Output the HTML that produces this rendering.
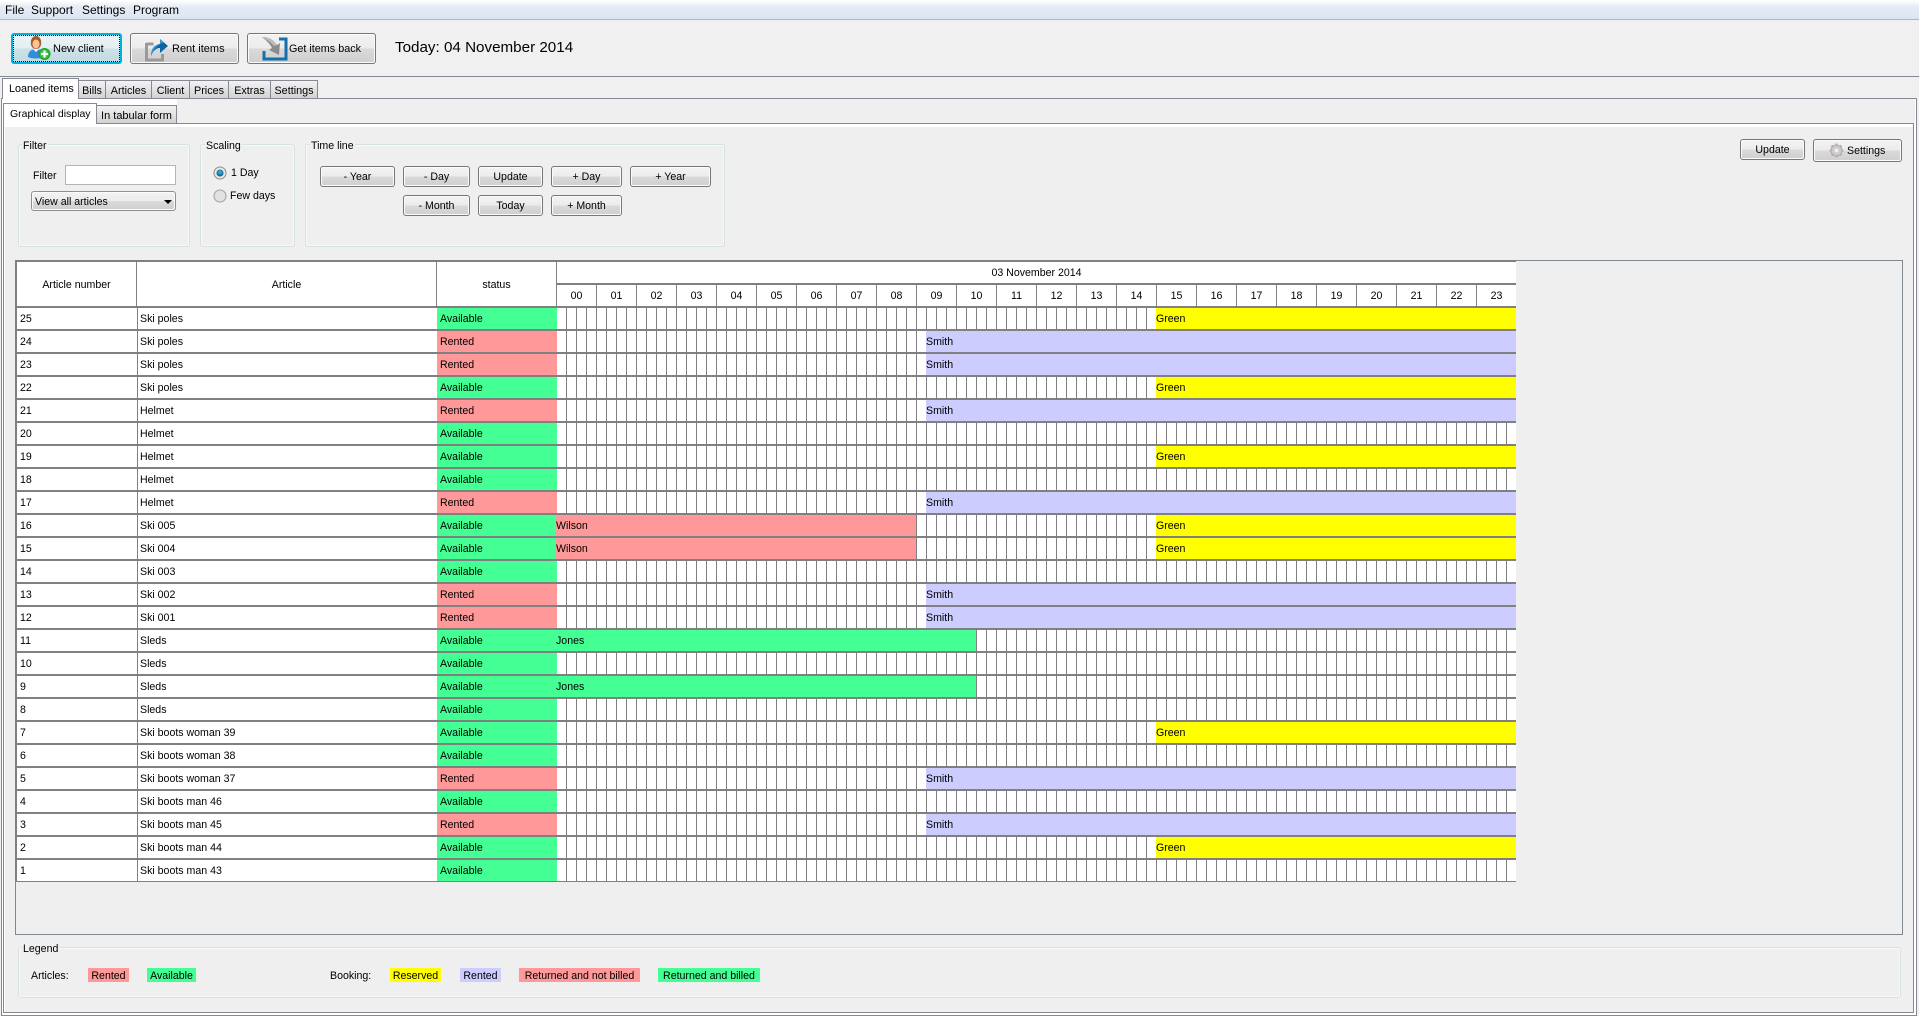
<!DOCTYPE html>
<html><head><meta charset="utf-8"><title>Loaned items</title>
<style>
html,body{margin:0;padding:0}
body{width:1919px;height:1016px;position:relative;overflow:hidden;background:#f0f0f0;font:10.6px/14px "Liberation Sans",sans-serif;color:#000}
div,span.t{position:absolute;box-sizing:border-box}
.t{position:absolute;white-space:nowrap}
.c{text-align:center}
.btn{position:absolute;box-sizing:border-box;border:1px solid #777;border-radius:3px;background:linear-gradient(#f3f3f3 0,#ececec 49%,#dadada 50%,#cfcfcf 100%);text-align:center;white-space:nowrap;box-shadow:inset 0 0 0 1px #fbfbfb}
.tab{border:1px solid #858a92;border-bottom:0;background:linear-gradient(#f2f2f2,#d2d2d2);text-align:center;white-space:nowrap;font-size:10.8px}
.grp{border:1px solid #d6e1e4;border-radius:3px;box-shadow:inset 0 0 0 1px #f7f9f9}
.lb{background:#f0f0f0;padding:0 1px}
.h{position:absolute;background:#fff;top:262px;height:44px;text-align:center;line-height:46px}
.r{position:absolute;left:17px;width:1499px;height:21px;background:#fff;line-height:23px}
.r>b,.hh{font-weight:400}
.r>b{position:absolute;top:0;height:21px;white-space:nowrap}
.n{left:3px;width:119px}
.a{left:120px;width:299px;background:#fff;border-left:1px solid #808080;padding-left:2px}
.s{left:420px;width:119px;padding-left:3px}
.g{left:540px;width:959px;background:repeating-linear-gradient(90deg,#fff 0 9px,#808080 9px 10px)}
.av{background:#44ff94}.re{background:#ff9999}
.sm{left:909px;width:590px;background:#ccccff}
.gr{left:1139px;width:360px;background:#ffff00}
.wi{left:539px;width:360px;background:#ff9999}
.jo{left:539px;width:420px;background:#44ff94}
.hr{position:absolute;top:285px;height:21px;width:39px;background:#fff;text-align:center;line-height:23px}
.lg{position:absolute;top:968px;height:14px;line-height:16px;text-align:center;white-space:nowrap}
</style></head><body>

<div style="left:0;top:0;width:1919px;height:19px;background:linear-gradient(#ffffff 0,#e6ecf6 35%,#dbe5f3 100%)"></div>
<div style="left:0;top:19px;width:1919px;height:1px;background:#b4b8be"></div>
<span class="t" style="left:5px;top:3px;font-size:12px">File</span>
<span class="t" style="left:31px;top:3px;font-size:12px">Support</span>
<span class="t" style="left:82px;top:3px;font-size:12px">Settings</span>
<span class="t" style="left:133px;top:3px;font-size:12px">Program</span>

<div class="btn" style="left:11px;top:33px;width:111px;height:31px;border:2px solid #00b2dc;background:linear-gradient(#eaf3f7 0,#e3eff4 49%,#cde1e9 50%,#c3dae3 100%);box-shadow:none"><div style="left:0;top:0;right:0;bottom:0;border:1px dotted #000"></div></div>
<svg style="position:absolute;left:26px;top:35px" width="26" height="26" viewBox="0 0 26 26"><path d="M2 22c0-6 4-8 8-8s8 2 8 8c-4 2-12 2-16 0z" fill="#2f8fd8"/><path d="M7 14l3 3 3-3z" fill="#fff"/><path d="M5 10C4 4 7 1 10 1s6 3 5 9c-1 2-2 4-5 4s-4-2-5-4z" fill="#a85a20"/><ellipse cx="10" cy="9" rx="3.500" ry="4.500" fill="#f4c49c"/><circle cx="18.500" cy="19" r="6" fill="#1fa02c"/><circle cx="18.500" cy="19" r="4.800" fill="#38c040"/><path d="M18.500 15.500v7M15 19h7" stroke="#fff" stroke-width="2.200"/></svg>
<span class="t" style="left:53px;top:42px;font-size:11px">New client</span>

<div class="btn" style="left:130px;top:33px;width:109px;height:31px"></div>
<svg style="position:absolute;left:145px;top:36px" width="24" height="26" viewBox="0 0 24 26"><path d="M1.500 8h7M1.500 7v17h16v-6" fill="none" stroke="#9a9a9a" stroke-width="3"/><path d="M6 20c0-7 3-11 9-12V3l8 7-8 7v-5c-4 0-7 3-9 8z" fill="#12639e"/><path d="M6 20c0-7 3-11 9-12V3l4 3.500C13 8 9 12 6 20z" fill="#2f9ad8"/></svg>
<span class="t" style="left:172px;top:42px;font-size:11px">Rent items</span>

<div class="btn" style="left:247px;top:33px;width:129px;height:31px"></div>
<svg style="position:absolute;left:262px;top:36px" width="26" height="25" viewBox="0 0 26 25"><path d="M17 3h7v20H2v-8" fill="none" stroke="#1670ad" stroke-width="3"/><path d="M0 1c7 0 12 3 15 8l3-2-1 12-10-5 3-2C8 8 5 5 0 1z" fill="#8c8c8c"/><path d="M0 1c7 0 12 3 15 8l-3 1C9 6 5 4 0 1z" fill="#bdbdbd"/></svg>
<span class="t" style="left:289px;top:42px;font-size:10.800px">Get items back</span>

<span class="t" style="left:395px;top:38px;font-size:15.200px;line-height:19px">Today: 04 November 2014</span>

<div style="left:0;top:76px;width:1919px;height:1px;background:#858a92"></div>
<div style="left:1px;top:98px;width:1916px;height:918px;border:1px solid #858a92;background:#fff"></div>
<div style="left:177px;top:99px;width:1738px;height:24px;background:#efefef"></div>
<div style="left:3px;top:123px;width:1911px;height:890px;border:1px solid #858a92;background:#fff"></div>
<div style="left:5px;top:127px;width:1908px;height:885px;background:#efefef"></div>

<div class="tab" style="left:2px;top:78px;width:77px;height:21px;background:#fff;z-index:2;line-height:20px;text-align:left;padding-left:6px">Loaned items</div>
<div class="tab" style="left:78px;top:80px;width:28px;height:18px;line-height:21px">Bills</div>
<div class="tab" style="left:105px;top:80px;width:47px;height:18px;line-height:21px">Articles</div>
<div class="tab" style="left:151px;top:80px;width:39px;height:18px;line-height:21px">Client</div>
<div class="tab" style="left:189px;top:80px;width:40px;height:18px;line-height:21px">Prices</div>
<div class="tab" style="left:228px;top:80px;width:43px;height:18px;line-height:21px">Extras</div>
<div class="tab" style="left:270px;top:80px;width:48px;height:18px;line-height:21px">Settings</div>
<div class="tab" style="left:3px;top:103px;width:94px;height:21px;background:#fff;z-index:2;line-height:20px;text-align:left;padding-left:6px;font-size:10.500px">Graphical display</div>
<div class="tab" style="left:96px;top:105px;width:81px;height:18px;line-height:21px;font-size:11px">In tabular form</div>

<div class="grp" style="left:18px;top:144px;width:172px;height:103px"></div>
<span class="t lb" style="left:22px;top:139px">Filter</span>
<span class="t" style="left:33px;top:169px">Filter</span>
<div style="left:65px;top:165px;width:111px;height:20px;background:#fff;border:1px solid #b5b5b5"></div>
<div class="btn" style="left:31px;top:191px;width:145px;height:20px;line-height:20px;text-align:left;padding-left:3px;border-color:#909090">View all articles<div style="left:132px;top:8px;width:0;height:0;border:4px solid transparent;border-top:4px solid #000;border-bottom:0"></div></div>

<div class="grp" style="left:200px;top:144px;width:95px;height:103px"></div>
<span class="t lb" style="left:205px;top:139px">Scaling</span>
<svg style="position:absolute;left:213px;top:166px" width="14" height="37" viewBox="0 0 14 37"><defs><radialGradient id="rd" cx=".5" cy=".4" r=".6"><stop offset="0" stop-color="#3fc0ee"/><stop offset="1" stop-color="#0a4f80"/></radialGradient></defs><circle cx="7" cy="7" r="6" fill="#e8e8e8" stroke="#8e8e8e"/><circle cx="7" cy="7" r="3.500" fill="url(#rd)"/><circle cx="7" cy="30" r="6" fill="#e2e2e2" stroke="#a0a0a0"/></svg>
<span class="t" style="left:231px;top:166px">1 Day</span>
<span class="t" style="left:230px;top:189px">Few days</span>

<div class="grp" style="left:305px;top:144px;width:420px;height:103px"></div>
<span class="t lb" style="left:310px;top:139px">Time line</span>
<div class="btn" style="left:320px;top:166px;width:75px;height:21px;line-height:21px">- Year</div>
<div class="btn" style="left:403px;top:166px;width:67px;height:21px;line-height:21px">- Day</div>
<div class="btn" style="left:478px;top:166px;width:65px;height:21px;line-height:21px">Update</div>
<div class="btn" style="left:551px;top:166px;width:71px;height:21px;line-height:21px">+ Day</div>
<div class="btn" style="left:630px;top:166px;width:81px;height:21px;line-height:21px">+ Year</div>
<div class="btn" style="left:403px;top:195px;width:67px;height:21px;line-height:21px">- Month</div>
<div class="btn" style="left:478px;top:195px;width:65px;height:21px;line-height:21px">Today</div>
<div class="btn" style="left:551px;top:195px;width:71px;height:21px;line-height:21px">+ Month</div>

<div class="btn" style="left:1740px;top:139px;width:65px;height:21px;line-height:20px">Update</div>
<div class="btn" style="left:1813px;top:139px;width:89px;height:23px;line-height:22px;text-align:left;padding-left:33px">Settings</div>
<svg style="position:absolute;left:1828px;top:142px" width="17" height="17" viewBox="0 0 17 17"><path d="M8.500 1.500v14M1.500 8.500h14M3.500 3.500l10 10M13.500 3.500l-10 10" stroke="#bdb8b8" stroke-width="2.600"/><circle cx="8.500" cy="8.500" r="5.500" fill="#cfcaca" stroke="#b0abab"/><circle cx="8.500" cy="8.500" r="2" fill="#efefef"/></svg>

<div style="left:15px;top:260px;width:1888px;height:675px;border:1px solid #808890;background:#efefef"></div>
<div style="left:15px;top:260px;width:1501px;height:622px;background:#808080"></div>

<div class="h" style="left:17px;width:119px">Article number</div>
<div class="h" style="left:137px;width:299px">Article</div>
<div class="h" style="left:437px;width:119px">status</div>
<div style="left:557px;top:262px;width:959px;height:21px;background:#fff;text-align:center;line-height:23px">03 November 2014</div>
<div class="hr" style="left:557px;">00</div><div class="hr" style="left:597px">01</div><div class="hr" style="left:637px">02</div><div class="hr" style="left:677px">03</div><div class="hr" style="left:717px">04</div><div class="hr" style="left:757px">05</div><div class="hr" style="left:797px">06</div><div class="hr" style="left:837px">07</div><div class="hr" style="left:877px">08</div><div class="hr" style="left:917px">09</div><div class="hr" style="left:957px">10</div><div class="hr" style="left:997px">11</div><div class="hr" style="left:1037px">12</div><div class="hr" style="left:1077px">13</div><div class="hr" style="left:1117px">14</div><div class="hr" style="left:1157px">15</div><div class="hr" style="left:1197px">16</div><div class="hr" style="left:1237px">17</div><div class="hr" style="left:1277px">18</div><div class="hr" style="left:1317px">19</div><div class="hr" style="left:1357px">20</div><div class="hr" style="left:1397px">21</div><div class="hr" style="left:1437px">22</div><div class="hr" style="left:1477px">23</div>

<div class="r" style="top:308px"><b class="n">25</b><b class="a">Ski poles</b><b class="s av">Available</b><b class="g"></b><b class="gr">Green</b></div>
<div class="r" style="top:331px"><b class="n">24</b><b class="a">Ski poles</b><b class="s re">Rented</b><b class="g"></b><b class="sm">Smith</b></div>
<div class="r" style="top:354px"><b class="n">23</b><b class="a">Ski poles</b><b class="s re">Rented</b><b class="g"></b><b class="sm">Smith</b></div>
<div class="r" style="top:377px"><b class="n">22</b><b class="a">Ski poles</b><b class="s av">Available</b><b class="g"></b><b class="gr">Green</b></div>
<div class="r" style="top:400px"><b class="n">21</b><b class="a">Helmet</b><b class="s re">Rented</b><b class="g"></b><b class="sm">Smith</b></div>
<div class="r" style="top:423px"><b class="n">20</b><b class="a">Helmet</b><b class="s av">Available</b><b class="g"></b></div>
<div class="r" style="top:446px"><b class="n">19</b><b class="a">Helmet</b><b class="s av">Available</b><b class="g"></b><b class="gr">Green</b></div>
<div class="r" style="top:469px"><b class="n">18</b><b class="a">Helmet</b><b class="s av">Available</b><b class="g"></b></div>
<div class="r" style="top:492px"><b class="n">17</b><b class="a">Helmet</b><b class="s re">Rented</b><b class="g"></b><b class="sm">Smith</b></div>
<div class="r" style="top:515px"><b class="n">16</b><b class="a">Ski 005</b><b class="s av">Available</b><b class="g"></b><b class="wi">Wilson</b><b class="gr">Green</b></div>
<div class="r" style="top:538px"><b class="n">15</b><b class="a">Ski 004</b><b class="s av">Available</b><b class="g"></b><b class="wi">Wilson</b><b class="gr">Green</b></div>
<div class="r" style="top:561px"><b class="n">14</b><b class="a">Ski 003</b><b class="s av">Available</b><b class="g"></b></div>
<div class="r" style="top:584px"><b class="n">13</b><b class="a">Ski 002</b><b class="s re">Rented</b><b class="g"></b><b class="sm">Smith</b></div>
<div class="r" style="top:607px"><b class="n">12</b><b class="a">Ski 001</b><b class="s re">Rented</b><b class="g"></b><b class="sm">Smith</b></div>
<div class="r" style="top:630px"><b class="n">11</b><b class="a">Sleds</b><b class="s av">Available</b><b class="g"></b><b class="jo">Jones</b></div>
<div class="r" style="top:653px"><b class="n">10</b><b class="a">Sleds</b><b class="s av">Available</b><b class="g"></b></div>
<div class="r" style="top:676px"><b class="n">9</b><b class="a">Sleds</b><b class="s av">Available</b><b class="g"></b><b class="jo">Jones</b></div>
<div class="r" style="top:699px"><b class="n">8</b><b class="a">Sleds</b><b class="s av">Available</b><b class="g"></b></div>
<div class="r" style="top:722px"><b class="n">7</b><b class="a">Ski boots woman 39</b><b class="s av">Available</b><b class="g"></b><b class="gr">Green</b></div>
<div class="r" style="top:745px"><b class="n">6</b><b class="a">Ski boots woman 38</b><b class="s av">Available</b><b class="g"></b></div>
<div class="r" style="top:768px"><b class="n">5</b><b class="a">Ski boots woman 37</b><b class="s re">Rented</b><b class="g"></b><b class="sm">Smith</b></div>
<div class="r" style="top:791px"><b class="n">4</b><b class="a">Ski boots man 46</b><b class="s av">Available</b><b class="g"></b></div>
<div class="r" style="top:814px"><b class="n">3</b><b class="a">Ski boots man 45</b><b class="s re">Rented</b><b class="g"></b><b class="sm">Smith</b></div>
<div class="r" style="top:837px"><b class="n">2</b><b class="a">Ski boots man 44</b><b class="s av">Available</b><b class="g"></b><b class="gr">Green</b></div>
<div class="r" style="top:860px"><b class="n">1</b><b class="a">Ski boots man 43</b><b class="s av">Available</b><b class="g"></b></div>

<div class="grp" style="left:18px;top:947px;width:1883px;height:51px"></div>
<span class="t" style="left:22px;top:942px;background:#efefef;padding:0 1px">Legend</span>
<span class="t" style="left:31px;top:969px">Articles:</span>
<span class="lg re" style="left:88px;width:41px">Rented</span>
<span class="lg av" style="left:147px;width:49px">Available</span>
<span class="t" style="left:330px;top:969px">Booking:</span>
<span class="lg" style="left:390px;width:51px;background:#ffff00">Reserved</span>
<span class="lg" style="left:460px;width:41px;background:#ccccff">Rented</span>
<span class="lg re" style="left:519px;width:121px">Returned and not billed</span>
<span class="lg av" style="left:658px;width:102px">Returned and billed</span>
</body></html>
